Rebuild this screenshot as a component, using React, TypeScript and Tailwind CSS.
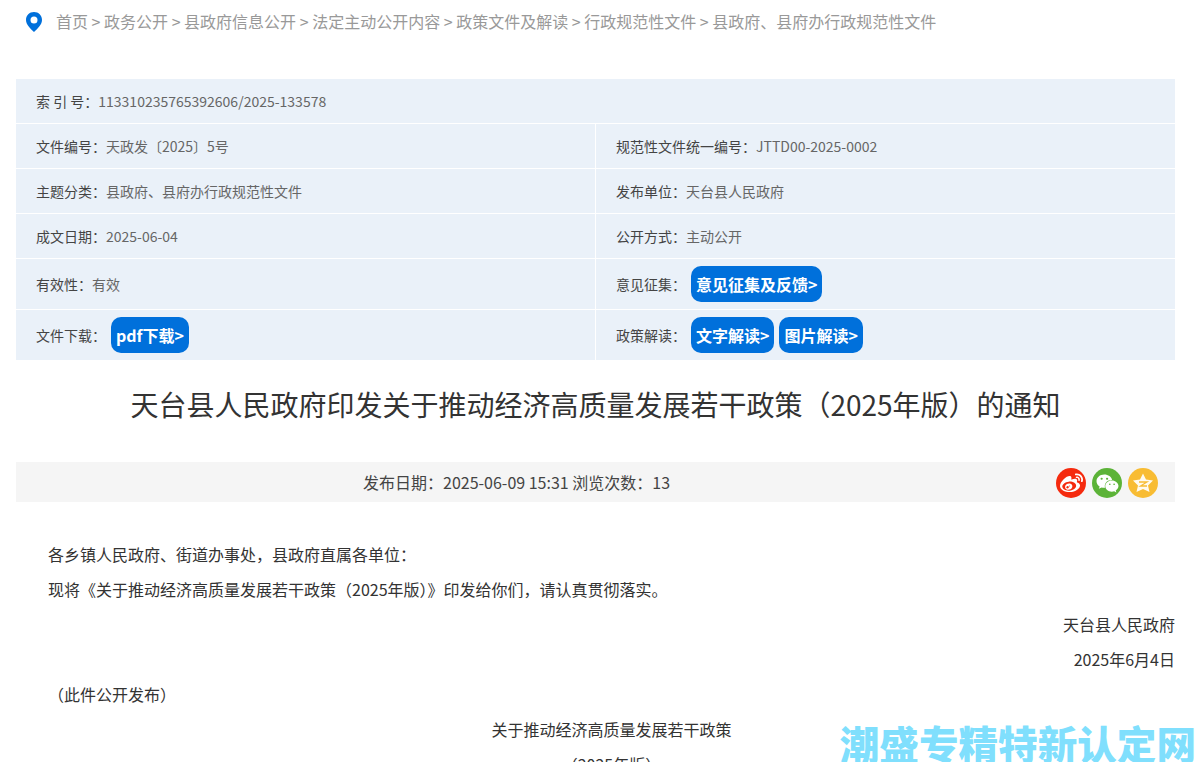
import React from 'react'
import { FaWeibo, FaWeixin } from 'react-icons/fa'

const crumbs = ['首页', '政务公开', '县政府信息公开', '法定主动公开内容', '政策文件及解读', '行政规范性文件', '县政府、县府办行政规范性文件']

function LinkBtn({ children }: { children: React.ReactNode }) {
    return (
        <span className="inline-block h-9 px-[5px] mr-[5px] rounded-[10px] bg-[#0070db] text-white text-base font-bold leading-9">
            {children}
        </span>
    )
}

function Cell({ label, value, children }: { label: string; value?: string; children?: React.ReactNode }) {
    return (
        <div className="flex-1 flex items-center pl-5 bg-[#eaf1f9] text-sm text-[#666]">
            <span className="text-[#444]">{label}</span>
            {value && <span>{value}</span>}
            {children}
        </div>
    )
}

export default function App() {
    return (
        <div
            className="relative w-[1195px] h-[762px] overflow-hidden bg-white"
            style={{ fontFamily: '"Noto Sans CJK SC", "Noto Sans", sans-serif' }}
        >
            {/* 面包屑 */}
            <div className="flex items-center h-[44px] pl-[25px] text-base text-[#999]">
                <svg width="18" height="22" viewBox="0 0 18 22" className="mr-[13px] shrink-0">
                    <path
                        fillRule="evenodd"
                        fill="#0070db"
                        d="M9 1C4.400 1 1 4.500 1 9c0 4.600 4.600 8.900 8 12 3.400-3.100 8-7.400 8-12 0-4.500-3.400-8-8-8zm0 4.500a3.500 3.500 0 1 1 0 7 3.500 3.500 0 0 1 0-7z"
                    />
                </svg>
                <div className="-mt-[2px]">{crumbs.join(' > ')}</div>
            </div>

            {/* 信息表 */}
            <div className="ml-4 mr-5 mt-[35px] flex flex-col gap-px">
                <div className="flex h-11"><Cell label="索 引 号：" value="113310235765392606/2025-133578" /></div>
                <div className="flex h-11 gap-px">
                    <Cell label="文件编号：" value="天政发〔2025〕5号" />
                    <Cell label="规范性文件统一编号：" value="JTTD00-2025-0002" />
                </div>
                <div className="flex h-11 gap-px">
                    <Cell label="主题分类：" value="县政府、县府办行政规范性文件" />
                    <Cell label="发布单位：" value="天台县人民政府" />
                </div>
                <div className="flex h-11 gap-px">
                    <Cell label="成文日期：" value="2025-06-04" />
                    <Cell label="公开方式：" value="主动公开" />
                </div>
                <div className="flex h-[50px] gap-px">
                    <Cell label="有效性：" value="有效" />
                    <Cell label="意见征集：">
                        <span className="ml-[5px]"><LinkBtn>意见征集及反馈&gt;</LinkBtn></span>
                    </Cell>
                </div>
                <div className="flex h-[50px] gap-px">
                    <Cell label="文件下载：">
                        <span className="ml-[5px]"><LinkBtn>pdf下载&gt;</LinkBtn></span>
                    </Cell>
                    <Cell label="政策解读：">
                        <span className="ml-[5px]"><LinkBtn>文字解读&gt;</LinkBtn><LinkBtn>图片解读&gt;</LinkBtn></span>
                    </Cell>
                </div>
            </div>

            {/* 标题 */}
            <h1 className="ml-4 mr-5 mt-6 text-center text-[28px] leading-[40px] text-[#333]">
                天台县人民政府印发关于推动经济高质量发展若干政策（2025年版）的通知
            </h1>

            {/* 日期栏 */}
            <div className="ml-4 mr-5 mt-[38px] h-10 bg-[#f5f5f5] flex items-center text-base text-[#444]">
                <span className="ml-[347px]">发布日期：2025-06-09 15:31 浏览次数：13</span>
                <div className="ml-auto mr-[17px] pt-[2px] flex gap-[6px]">
                    <span className="w-[30px] h-[30px] rounded-full bg-[#f52a0e] text-white flex items-center justify-center">
                        <FaWeibo size={23} />
                    </span>
                    <span className="w-[30px] h-[30px] rounded-full bg-[#5cb338] text-white flex items-center justify-center">
                        <FaWeixin size={23} />
                    </span>
                    <span className="w-[30px] h-[30px] rounded-full bg-[#f8bc33] flex items-center justify-center">
                        <svg width="22" height="22" viewBox="0 0 22 22">
                            <path
                                fill="#fff"
                                fillOpacity="0.92"
                                d="M11 1.500L14 7.500L21 8.500L16 13.500L17.500 20L11 17L4.500 20L6 13.500L1 8.500L8 7.500Z"
                            />
                            <path d="M7 10h8l-6.500 4h6.500" fill="none" stroke="#f8bc33" strokeWidth="1.300" />
                        </svg>
                    </span>
                </div>
            </div>

            {/* 正文 */}
            <div className="mt-[35px] ml-4 mr-5 text-base leading-[35px] text-[#333] indent-8">
                <p>各乡镇人民政府、街道办事处，县政府直属各单位：</p>
                <p>现将《关于推动经济高质量发展若干政策（2025年版）》印发给你们，请认真贯彻落实。</p>
                <p className="text-right">天台县人民政府</p>
                <p className="text-right">2025年6月4日</p>
                <p>（此件公开发布）</p>
                <p className="text-center">关于推动经济高质量发展若干政策</p>
                <p className="text-center">（2025年版）</p>
            </div>

            {/* 水印 */}
            <div className="absolute right-[-1px] bottom-0 text-[39.6px] leading-[38px] font-black text-[#80dffd] whitespace-nowrap">
                潮盛专精特新认定网
            </div>
        </div>
    )
}
